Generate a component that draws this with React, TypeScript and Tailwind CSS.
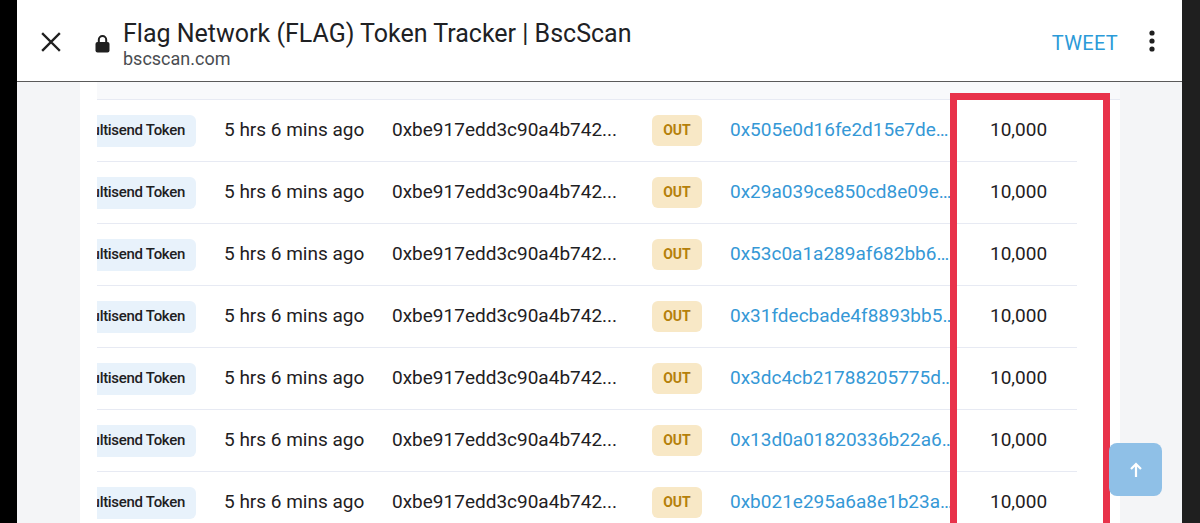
import React from 'react';

const links = [
  '0x505e0d16fe2d15e7dee4a1c2',
  '0x29a039ce850cd8e09e3b1f77',
  '0x53c0a1a289af682bb6d4c0e1',
  '0x31fdecbade4f8893bb5a2c90',
  '0x3dc4cb21788205775d9e03ab',
  '0x13d0a01820336b22a6f7e4d2',
  '0xb021e295a6a8e1b23a0c5f18',
];

function CloseIcon() {
  return (
    <svg width="20" height="20" viewBox="0 0 20 20" className="mt-[3px] shrink-0">
      <path d="M2 2 L18 18 M18 2 L2 18" stroke="#1f1f1f" strokeWidth="2.4" strokeLinecap="square" />
    </svg>
  );
}

function LockIcon() {
  return (
    <svg width="15" height="19" viewBox="0 0 15 19" className="shrink-0">
      <path d="M3.8 8.5 V5.8 a3.7 3.7 0 0 1 7.4 0 V8.5" fill="none" stroke="#1f1f1f" strokeWidth="2" />
      <rect x="0.5" y="8" width="14" height="10.5" rx="2" fill="#1f1f1f" />
    </svg>
  );
}

function MoreIcon() {
  return (
    <svg width="8" height="22" viewBox="0 0 8 22" className="shrink-0">
      <circle cx="4" cy="3" r="2.6" fill="#1f1f1f" />
      <circle cx="4" cy="11" r="2.6" fill="#1f1f1f" />
      <circle cx="4" cy="19" r="2.6" fill="#1f1f1f" />
    </svg>
  );
}

function Row({ to }: { to: string }) {
  return (
    <div className="flex h-[62px] w-[980px] shrink-0 items-center border-b border-[#e7eaf3] text-[19px]">
      <div className="w-[127px] shrink-0">
        <span className="ml-[-31px] flex h-[32px] w-[130px] items-center justify-end rounded-[6px] bg-[#e8f2fb] pr-[11px] text-[15px] font-medium tracking-[-0.3px] text-[#1e2022]">
          Multisend Token
        </span>
      </div>
      <div className="w-[168px] shrink-0 text-[#1e2022]">5 hrs 6 mins ago</div>
      <div className="w-[260px] shrink-0 text-[#1e2022]">0xbe917edd3c90a4b742...</div>
      <div className="w-[78px] shrink-0">
        <span className="flex h-[31px] w-[50px] items-center justify-center rounded-[6px] bg-[#f8e8c6] text-[14px] font-bold text-[#b5800a]">
          OUT
        </span>
      </div>
      <div className="w-[226px] shrink-0 truncate text-[#3598d6]">{to}</div>
      <div className="pl-[34px] text-[#1e2022]">10,000</div>
    </div>
  );
}

export default function App() {
  return (
    <div className="relative flex h-[523px] w-[1200px] overflow-hidden bg-white font-['Roboto',sans-serif]">
      <div className="w-[17px] shrink-0 bg-black" />
      <div className="flex min-w-0 flex-1 flex-col">
        <header className="flex h-[82px] shrink-0 items-center border-b border-[#5a5a5a] bg-white pl-[24px] pr-[26px]">
          <CloseIcon />
          <div className="ml-[34px] mt-[5px]">
            <LockIcon />
          </div>
          <div className="ml-[13px] mt-[6px] flex flex-col">
            <div className="text-[25px] leading-[30px] text-[#202124]">
              Flag Network (FLAG) Token Tracker | BscScan
            </div>
            <div className="text-[18px] leading-[20px] text-[#4a4d51]">bscscan.com</div>
          </div>
          <div className="ml-auto flex items-center gap-[30px]">
            <span className="mt-[5px] text-[20px] tracking-[0.3px] text-[#2b9ad8]">TWEET</span>
            <MoreIcon />
          </div>
        </header>
        <div className="flex min-h-0 flex-1 bg-[#f4f5f7] pl-[63px]">
          <div className="flex w-[1040px] shrink-0 flex-col bg-white pl-[17px]">
            <div className="flex min-w-0 flex-1 flex-col overflow-hidden">
              <div className="h-[18px] shrink-0 border-b border-[#e7eaf3] bg-[#f8f9fb]" />
              {links.map((l, i) => (
                <Row key={i} to={l} />
              ))}
            </div>
          </div>
        </div>
      </div>
      <div className="w-[18px] shrink-0 bg-[#1f1f1f]" />

      <div className="absolute left-[950px] top-[93px] h-[460px] w-[160px] border-[7px] border-[#e8324a]" />

      <div className="absolute left-[1109px] top-[443px] flex h-[53px] w-[53px] items-center justify-center rounded-[8px] bg-[#8fc0e7]">
        <svg width="14" height="16" viewBox="0 0 14 16">
          <path d="M7 15 V2 M2 7 L7 2 L12 7" fill="none" stroke="#fff" strokeWidth="2.2" />
        </svg>
      </div>
    </div>
  );
}
